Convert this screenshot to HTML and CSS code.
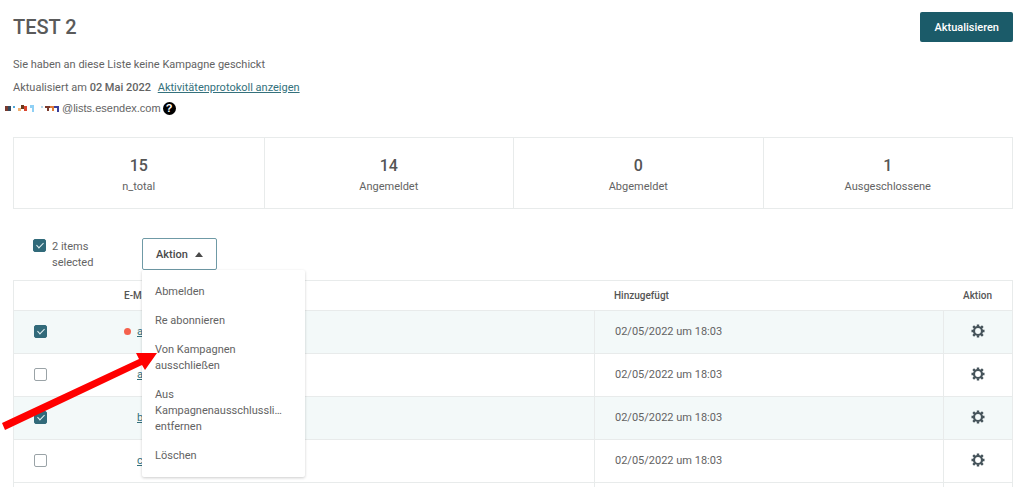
FILE: index.html
```html
<!DOCTYPE html>
<html lang="de">
<head>
    <meta charset="UTF-8">
    <meta name="viewport" content="width=device-width, initial-scale=1.0">
    <title>TEST 2</title>
    <link rel="stylesheet" href="styles.css">
</head>
<body>
    <!-- Gear icon used in every row -->
    <svg class="sprite" width="0" height="0" aria-hidden="true">
        <symbol id="gear" viewBox="0 0 14 14">
            <circle cx="7" cy="7" r="4" fill="none" stroke="currentColor" stroke-width="2.2"/>
            <path d="M7 0.5v2M7 11.5v2M0.5 7h2M11.5 7h2M2.2 2.2l1.7 1.7M10.1 10.1l1.7 1.7M2.2 11.8l1.7-1.7M10.1 3.9l1.7-1.7" stroke="currentColor" stroke-width="2.4"/>
        </symbol>
    </svg>

    <header class="page-header">
        <h1>TEST 2</h1>
        <button type="button" class="btn-primary">Aktualisieren</button>
    </header>

    <div class="list-info">
        <p>Sie haben an diese Liste keine Kampagne geschickt</p>
        <p>Aktualisiert am <strong>02 Mai 2022</strong> <a href="#">Aktivitätenprotokoll anzeigen</a></p>
    </div>
    <div class="list-email">
        <!-- Masked part of the address -->
        <svg width="55" height="8" viewBox="0 0 55 8" aria-hidden="true">
            <path fill="#7a3b2e" d="M0 2h3v5h-3z"/>
            <path fill="#34495e" d="M3 2h3v5h-3z"/>
            <path fill="#4fa8dc" d="M8 2h2v2h-2z"/>
            <path fill="#f0b070" d="M13 4h3v3h-3z"/>
            <path fill="#6b3a1e" d="M16 1h3v4h-3z"/>
            <path fill="#d9452f" d="M19 2h3v5h-3z"/>
            <path fill="#8fd0f5" d="M25 1h4v7h-2v-4h-2z"/>
            <path fill="#b5d7ea" d="M36 2h2v2h-2z"/>
            <path fill="#7a3b2e" d="M40 2h5v2h-1v3h-2v-3h-2z"/>
            <path fill="#e07b39" d="M45 2h4v5h-2v-3h-2z"/>
            <path fill="#3b3f9a" d="M49 2h5v6h-2v-4h-3z"/>
        </svg>
        <span>@lists.esendex.com</span>
        <button type="button" class="help" aria-label="Hilfe">?</button>
    </div>

    <dl class="stats">
        <div><dd>15</dd><dt>n_total</dt></div>
        <div><dd>14</dd><dt>Angemeldet</dt></div>
        <div><dd>0</dd><dt>Abgemeldet</dt></div>
        <div><dd>1</dd><dt>Ausgeschlossene</dt></div>
    </dl>

    <div class="toolbar">
        <label class="selection"><input type="checkbox" checked> <span>2 items selected</span></label>
        <div class="dropdown">
            <button type="button" class="btn-outline" aria-expanded="true">Aktion
                <svg width="8" height="5" viewBox="0 0 8 5" aria-hidden="true"><path fill="currentColor" d="M4 0L8 5H0z"/></svg>
            </button>
            <div class="menu">
                <button type="button">Abmelden</button>
                <button type="button">Re abonnieren</button>
                <button type="button">Von Kampagnen ausschließen</button>
                <button type="button">Aus Kampagnenausschlussli… entfernen</button>
                <button type="button">Löschen</button>
            </div>
            <svg class="pointer" width="156" height="78" viewBox="0 0 156 78" aria-hidden="true">
                <path fill="#ff0000" d="M155 1L143 18L140 13L3 78L0 71L137 7L134 1z"/>
            </svg>
        </div>
    </div>

    <table>
        <thead>
            <tr>
                <th class="col-check"></th>
                <th class="col-mail">E-Mail</th>
                <th class="col-date">Hinzugefügt</th>
                <th class="col-action">Aktion</th>
            </tr>
        </thead>
        <tbody>
            <tr class="selected">
                <td class="col-check"><input type="checkbox" aria-label="a" checked></td>
                <td class="col-mail"><span class="dot"></span><a href="#">a</a></td>
                <td>02/05/2022 um 18:03</td>
                <td class="col-action"><button type="button" aria-label="Aktion"><svg width="14" height="14"><use href="#gear"/></svg></button></td>
            </tr>
            <tr>
                <td class="col-check"><input type="checkbox" aria-label="a"></td>
                <td class="col-mail"><span class="dot off"></span><a href="#">a</a></td>
                <td>02/05/2022 um 18:03</td>
                <td class="col-action"><button type="button" aria-label="Aktion"><svg width="14" height="14"><use href="#gear"/></svg></button></td>
            </tr>
            <tr class="selected">
                <td class="col-check"><input type="checkbox" aria-label="b" checked></td>
                <td class="col-mail"><span class="dot off"></span><a href="#">b</a></td>
                <td>02/05/2022 um 18:03</td>
                <td class="col-action"><button type="button" aria-label="Aktion"><svg width="14" height="14"><use href="#gear"/></svg></button></td>
            </tr>
            <tr>
                <td class="col-check"><input type="checkbox" aria-label="c"></td>
                <td class="col-mail"><span class="dot off"></span><a href="#">c</a></td>
                <td>02/05/2022 um 18:03</td>
                <td class="col-action"><button type="button" aria-label="Aktion"><svg width="14" height="14"><use href="#gear"/></svg></button></td>
            </tr>
            <tr class="cut">
                <td></td>
                <td></td>
                <td></td>
                <td></td>
            </tr>
        </tbody>
    </table>
</body>
</html>
```
FILE: styles.css
```css
* {
    box-sizing: border-box;
}

body {
    margin: 0;
    padding: 12px 11px 8px 13px;
    font-family: Roboto, sans-serif;
    font-size: 11px;
    line-height: 16px;
    color: #636363;
    background: #fff;
}

button, input {
    font-family: inherit;
    margin: 0;
}

h1, p, dl, dd {
    margin: 0;
}

.sprite {
    position: absolute;
}

.page-header {
    display: flex;
    justify-content: space-between;
    align-items: center;
    height: 30px;
}

h1 {
    font-size: 20px;
    font-weight: 500;
    color: #5a5a5a;
}

.btn-primary {
    height: 30px;
    padding: 0 14px;
    border: none;
    border-radius: 2px;
    background: #1b5b69;
    color: #fff;
    font-size: 11px;
    font-weight: 500;
}

.list-info {
    margin-top: 11px;
    line-height: 23px;
}

.list-info strong {
    font-weight: 500;
    margin-right: 4px;
}

a {
    color: #34717c;
}

.list-email {
    display: flex;
    align-items: center;
    margin-left: -8px;
    height: 18px;
    font-family: "Liberation Sans", sans-serif;
}

.list-email svg {
    margin-right: 2px;
}

.help {
    width: 13px;
    height: 13px;
    margin-left: 2px;
    padding: 0;
    border: none;
    border-radius: 50%;
    background: #000;
    color: #fff;
    font-size: 11px;
    font-weight: bold;
    line-height: 13px;
}

/* Counters */
.stats {
    display: grid;
    grid-template-columns: repeat(4, 1fr);
    margin-top: 20px;
    border: 1px solid #e8ebeb;
    text-align: center;
}

.stats div {
    display: flex;
    flex-direction: column;
    gap: 4px;
    padding: 19px 0 13px;
}

.stats div + div {
    border-left: 1px solid #e8ebeb;
}

.stats dd {
    font-size: 16px;
    line-height: 18px;
    font-weight: 500;
    color: #555;
}

/* Selection and bulk actions */
.toolbar {
    display: flex;
    height: 71px;
    padding-top: 29px;
}

.selection {
    display: flex;
    gap: 6px;
    width: 129px;
    padding-left: 20px;
}

.selection span {
    width: 60px;
    padding-top: 1px;
}

input[type="checkbox"] {
    appearance: none;
    display: block;
    flex-shrink: 0;
    width: 13px;
    height: 13px;
    border: 1px solid #9aa3a7;
    border-radius: 2px;
    background: #fff;
}

input[type="checkbox"]:checked {
    border-color: #316a7a;
    background: #316a7a;
}

input[type="checkbox"]:checked::after {
    content: "";
    display: block;
    width: 3px;
    height: 6px;
    margin: 1px 0 0 4px;
    border: solid #e4f1f3;
    border-width: 0 1px 1px 0;
    transform: rotate(45deg);
}

.selection input {
    margin-top: 1px;
}

.dropdown {
    position: relative;
}

.btn-outline {
    display: flex;
    align-items: center;
    gap: 7px;
    width: 75px;
    height: 32px;
    padding: 0 13px;
    border: 1px solid #6f9aa6;
    border-radius: 2px;
    background: #fff;
    color: #4a4a4a;
    font-size: 11px;
    font-weight: 500;
}

.btn-outline svg {
    flex-shrink: 0;
}

.menu {
    position: absolute;
    top: 32px;
    left: 0;
    z-index: 1;
    width: 163px;
    padding: 8px 0 6px;
    border-radius: 2px;
    background: #fff;
    box-shadow: 0 1px 3px rgba(0, 0, 0, 0.2);
}

.menu button {
    display: block;
    width: 100%;
    padding: 6px 13px 7px;
    border: none;
    background: none;
    color: #636363;
    font-size: 11px;
    line-height: 16px;
    text-align: left;
}

.pointer {
    position: absolute;
    top: 114px;
    left: -140px;
    z-index: 2;
}

/* Contacts */
table {
    width: 100%;
    table-layout: fixed;
    border-collapse: separate;
    border-spacing: 0;
    border: 1px solid #e8ebeb;
    border-bottom: none;
}

th, td {
    padding: 0 20px;
    font-weight: normal;
    text-align: left;
}

th {
    height: 29px;
    font-size: 10px;
    font-weight: 500;
    color: #555;
}

td {
    height: 43px;
    padding-bottom: 1px;
    border-top: 1px solid #e8ebeb;
}

td:nth-child(n+3) {
    border-left: 1px solid #e8ebeb;
}

tr.selected {
    background: #f3f9f9;
}

tr.cut td {
    height: 5px;
}

.col-check {
    width: 90px;
}

.col-date {
    width: 349px;
}

th.col-action {
    width: 69px;
}

.col-action {
    padding: 0;
    text-align: center;
}

td.col-action {
    padding-bottom: 2px;
}

.col-action button {
    display: block;
    width: 14px;
    height: 14px;
    margin: 0 auto;
    padding: 0;
    border: none;
    background: none;
    color: #45535a;
}

.col-action svg {
    display: block;
}

.dot {
    display: inline-block;
    width: 7px;
    height: 7px;
    margin-right: 6px;
    border-radius: 50%;
    background: #f5614d;
}

.dot.off {
    visibility: hidden;
}
```
